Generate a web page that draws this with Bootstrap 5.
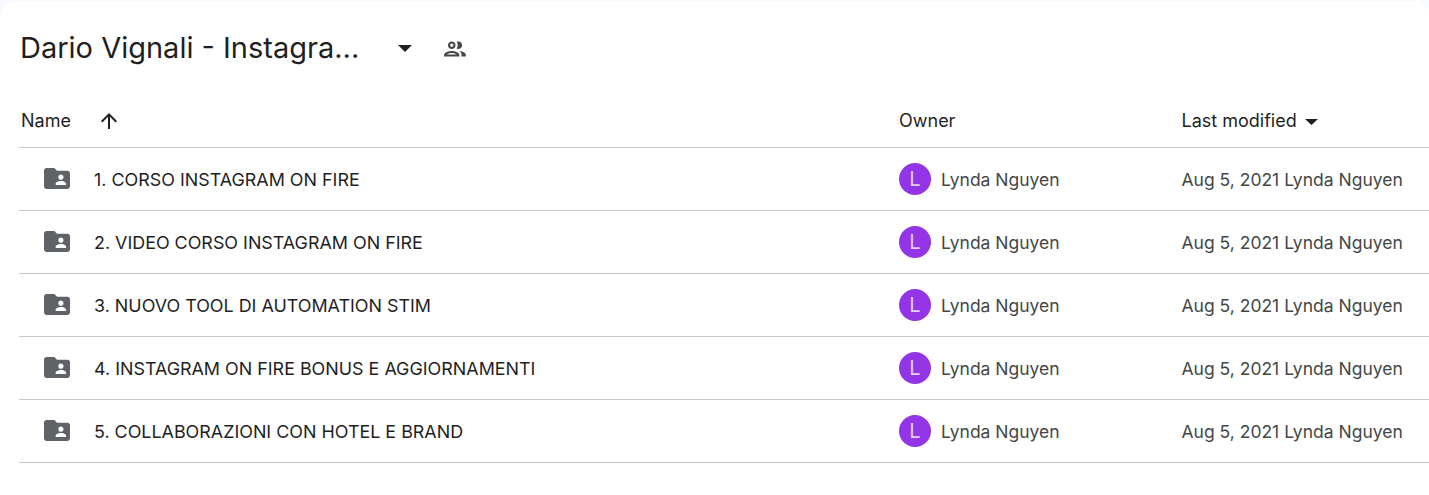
<!DOCTYPE html>
<html lang="en">
<head>
<meta charset="utf-8">
<title>Dario Vignali - Instagram</title>
<link href="https://cdn.jsdelivr.net/npm/bootstrap@5.3.0/dist/css/bootstrap.min.css" rel="stylesheet">
<style>
html,body{height:100%;overflow:hidden}
body{background:#f8fafd;font-family:Inter,"Liberation Sans",sans-serif;color:#1f1f1f}
.icon-defs{display:none}
.drive-panel{background:#fff;border-radius:16px 16px 0 0;height:494px;margin-top:1px;padding:0 0 0 19px}
.title-bar{height:95px}
.folder-title{font-family:Inter,"Liberation Sans",sans-serif;font-size:29px;font-weight:400;margin:0 0 2px;width:379px;line-height:36px;white-space:nowrap;color:#1f1f1f;padding-left:1px}
.title-caret{margin-right:30px;flex:none}
.head-row{height:52px;border-bottom:1px solid #c7c7c7;font-size:18px;font-weight:400;color:#1f1f1f;padding-bottom:2px}
.head-caret{margin-top:3px}
.list-row{height:63px;border-bottom:1px solid #c7c7c7;font-size:17.9px}
.col-name{width:880px;flex:none}
.col-owner{width:282.5px;flex:none}
.name-head{padding-left:2px}
.sort-arrow{margin-left:26px}
.folder-ico{margin-left:25px;margin-right:24px;flex:none}
.owner-avatar{width:32px;height:32px;border-radius:50%;background:#9334e6;color:#e3cffa;font-size:20px;font-weight:400;line-height:32px;text-align:center;margin-right:10px}
.muted-cell{color:#444746;font-size:17.5px}
.row-text{padding-top:2px}
</style>
</head>
<body>
<svg class="icon-defs" aria-hidden="true"><symbol id="ico-folder" viewBox="2 4 20 16"><path fill-rule="evenodd" d="M20 6h-8l-2-2H4c-1.100 0-2 .9-2 2v12c0 1.100.9 2 2 2h16c1.100 0 2-.9 2-2V8c0-1.100-.9-2-2-2zm-5 3c1.100 0 2 .9 2 2s-.9 2-2 2-2-.9-2-2 .9-2 2-2zm4 8h-8v-1c0-1.330 2.670-2 4-2s4 .67 4 2v1z"/></symbol></svg>
<main class="drive-panel">
  <div class="title-bar d-flex align-items-center">
    <h1 class="folder-title">Dario Vignali - Instagra...</h1>
    <svg class="title-caret" width="14" height="7" viewBox="0 0 14 7"><path d="M0 0h14L7 7z" fill="#1f1f1f"/></svg>
    <svg width="26" height="26" viewBox="0 0 24 24" fill="#444746"><path d="M9 12c1.930 0 3.500-1.570 3.500-3.500S10.930 5 9 5 5.500 6.570 5.500 8.500 7.070 12 9 12zm0-5c.83 0 1.500.67 1.500 1.500S9.830 10 9 10s-1.500-.67-1.500-1.500S8.170 7 9 7zm0 6.750c-2.340 0-7 1.170-7 3.500V19h14v-1.750c0-2.330-4.660-3.500-7-3.500zM4.340 17c.84-.58 2.870-1.250 4.660-1.250s3.820.67 4.660 1.250H4.340zm11.700-3.190c1.160.84 1.960 1.960 1.960 3.440V19h4v-1.750c0-2.020-3.500-3.170-5.960-3.440zM15 12c1.930 0 3.500-1.570 3.500-3.500S16.930 5 15 5c-.54 0-1.040.13-1.500.35.63.89 1 1.980 1 3.150s-.37 2.260-1 3.150c.46.22.96.35 1.500.35z"/></svg>
  </div>
  <div class="head-row d-flex align-items-center">
    <div class="col-name d-flex align-items-center name-head">Name
      <svg class="sort-arrow" width="24" height="24" viewBox="0 0 24 24"><path d="M4 12l1.410 1.410L11 7.830V20h2V7.830l5.580 5.590L20 12l-8-8-8 8z" fill="#1f1f1f"/></svg>
    </div>
    <div class="col-owner">Owner</div>
    <div class="d-flex align-items-center gap-2">Last modified
      <svg class="head-caret" width="13" height="6" viewBox="0 0 13 6"><path d="M0 0h13L6.500 6z" fill="#1f1f1f"/></svg>
    </div>
  </div>
  <div class="list-row d-flex align-items-center">
    <div class="col-name d-flex align-items-center">
      <svg class="folder-ico" width="26" height="21" fill="#5f6368"><use href="#ico-folder"/></svg>
      <span class="row-text">1. CORSO INSTAGRAM ON FIRE</span>
    </div>
    <div class="col-owner d-flex align-items-center muted-cell"><div class="owner-avatar">L</div><span class="row-text">Lynda Nguyen</span></div>
    <div class="muted-cell row-text">Aug 5, 2021 Lynda Nguyen</div>
  </div>
  <div class="list-row d-flex align-items-center">
    <div class="col-name d-flex align-items-center">
      <svg class="folder-ico" width="26" height="21" fill="#5f6368"><use href="#ico-folder"/></svg>
      <span class="row-text">2. VIDEO CORSO INSTAGRAM ON FIRE</span>
    </div>
    <div class="col-owner d-flex align-items-center muted-cell"><div class="owner-avatar">L</div><span class="row-text">Lynda Nguyen</span></div>
    <div class="muted-cell row-text">Aug 5, 2021 Lynda Nguyen</div>
  </div>
  <div class="list-row d-flex align-items-center">
    <div class="col-name d-flex align-items-center">
      <svg class="folder-ico" width="26" height="21" fill="#5f6368"><use href="#ico-folder"/></svg>
      <span class="row-text">3. NUOVO TOOL DI AUTOMATION STIM</span>
    </div>
    <div class="col-owner d-flex align-items-center muted-cell"><div class="owner-avatar">L</div><span class="row-text">Lynda Nguyen</span></div>
    <div class="muted-cell row-text">Aug 5, 2021 Lynda Nguyen</div>
  </div>
  <div class="list-row d-flex align-items-center">
    <div class="col-name d-flex align-items-center">
      <svg class="folder-ico" width="26" height="21" fill="#5f6368"><use href="#ico-folder"/></svg>
      <span class="row-text">4. INSTAGRAM ON FIRE BONUS E AGGIORNAMENTI</span>
    </div>
    <div class="col-owner d-flex align-items-center muted-cell"><div class="owner-avatar">L</div><span class="row-text">Lynda Nguyen</span></div>
    <div class="muted-cell row-text">Aug 5, 2021 Lynda Nguyen</div>
  </div>
  <div class="list-row d-flex align-items-center">
    <div class="col-name d-flex align-items-center">
      <svg class="folder-ico" width="26" height="21" fill="#5f6368"><use href="#ico-folder"/></svg>
      <span class="row-text">5. COLLABORAZIONI CON HOTEL E BRAND</span>
    </div>
    <div class="col-owner d-flex align-items-center muted-cell"><div class="owner-avatar">L</div><span class="row-text">Lynda Nguyen</span></div>
    <div class="muted-cell row-text">Aug 5, 2021 Lynda Nguyen</div>
  </div>
</main>
<script src="https://cdn.jsdelivr.net/npm/bootstrap@5.3.0/dist/js/bootstrap.bundle.min.js"></script>
</body>
</html>
